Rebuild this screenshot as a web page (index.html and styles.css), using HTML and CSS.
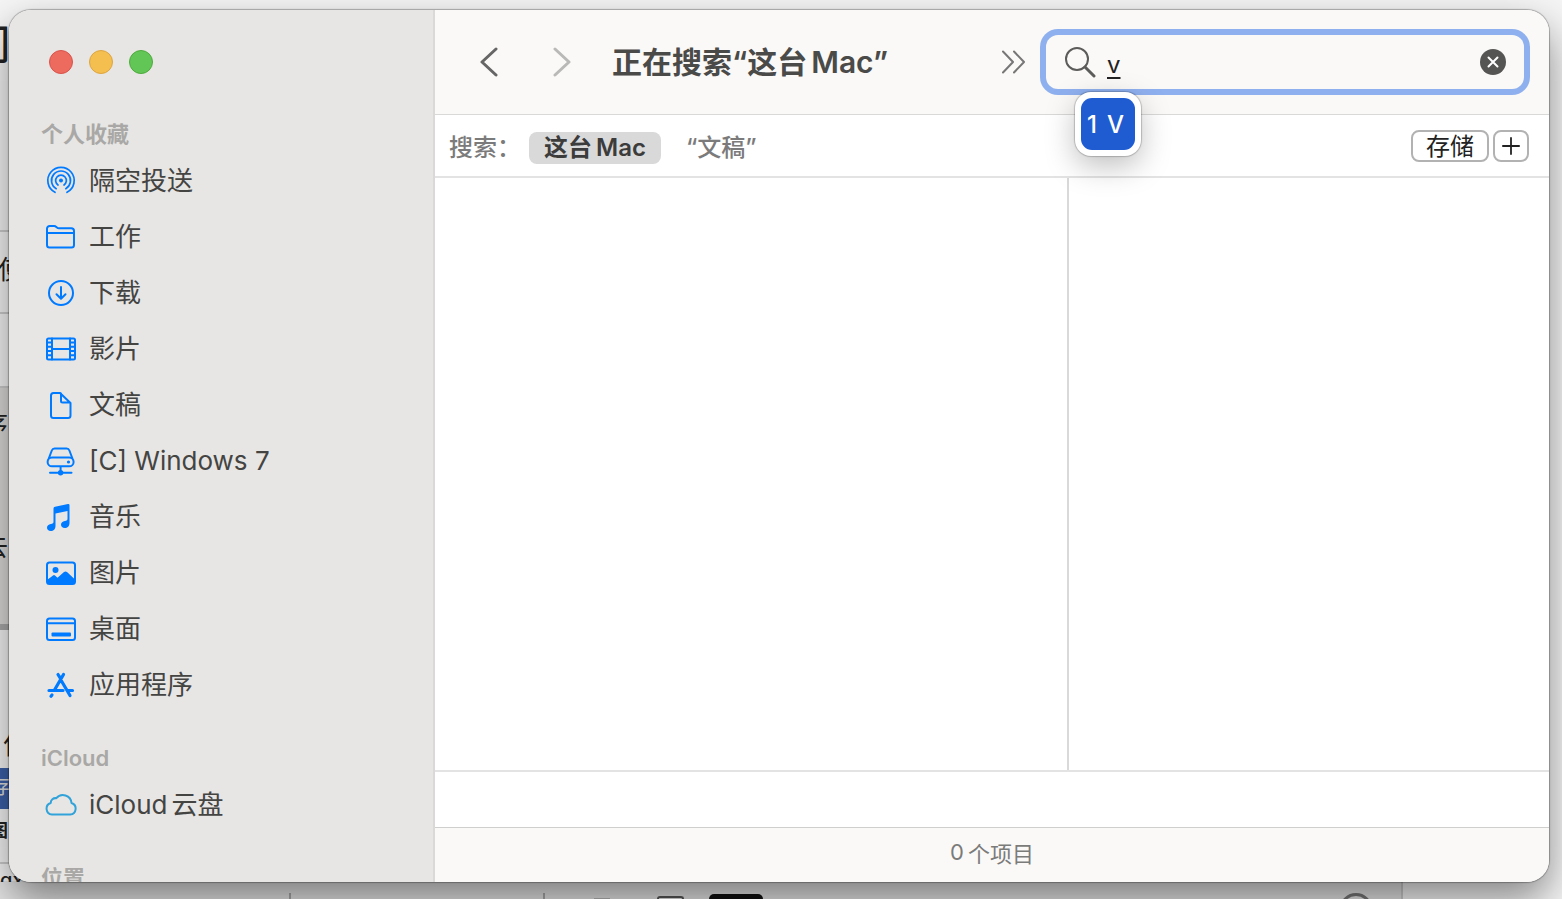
FILE: index.html
```html
<!DOCTYPE html>
<html lang="zh-CN">
<head>
<meta charset="utf-8">
<meta name="viewport" content="width=device-width, initial-scale=1">
<title>正在搜索“这台 Mac”</title>
<link rel="stylesheet" href="styles.css">
</head>
<body>
<div class="backdrop" aria-hidden="true">
  <div class="band band-a"></div>
  <div class="band band-b"></div>
  <div class="band band-c"></div>
  <div class="band band-blue"></div>
  <div class="band band-d"></div>
  <div class="shelf"></div>
  <span class="frag frag-1">们</span>
  <span class="frag frag-2">使</span>
  <span class="frag frag-3">序</span>
  <span class="frag frag-4">去</span>
  <span class="frag frag-5">作</span>
  <span class="frag frag-6">存</span>
  <span class="frag frag-7">图</span>
  <span class="frag frag-8">ngx.</span>
  <i class="tick tick-1"></i>
  <i class="tick tick-2"></i>
  <i class="tick tick-3"></i>
  <i class="scrap scrap-1"></i>
  <i class="scrap scrap-2"></i>
  <i class="scrap scrap-3"></i>
  <i class="scrap scrap-4"></i>
</div>

<div class="window">
  <aside class="sidebar">
    <div class="lights">
      <button class="light red" aria-label="关闭"></button>
      <button class="light yellow" aria-label="最小化"></button>
      <button class="light green" aria-label="缩放"></button>
    </div>
    <nav class="places">
      <section class="group">
        <h2>个人收藏</h2>
        <a href="#airdrop"><svg viewBox="0 0 32 32" class="icon thin"><circle cx="16" cy="15.500" r="2" class="fill"/><path d="M13 20a5.400 5.400 0 1 1 6 0M11.200 23.700a9.500 9.500 0 1 1 9.600 0M10 27.300a13.200 13.200 0 1 1 12 0"/></svg>隔空投送</a>
        <a href="#work"><svg viewBox="0 0 32 32" class="icon"><path d="M2 24V7.700a2.700 2.700 0 0 1 2.700-2.700h4.300c2.500 0 2.700 2.300 5 2.300h12.300a2.700 2.700 0 0 1 2.700 2.700v14a2.500 2.500 0 0 1-2.500 2.500h-22a2.500 2.500 0 0 1-2.500-2.500zM2 12h27"/></svg>工作</a>
        <a href="#downloads"><svg viewBox="0 0 32 32" class="icon"><circle cx="16" cy="16" r="12"/><path d="M16 10v11.500M11.500 17.300l4.500 4.500 4.500-4.500"/></svg>下载</a>
        <a href="#movies"><svg viewBox="0 0 32 32" class="icon"><rect x="2" y="5.500" width="28" height="21" rx="1.500"/><path d="M7 5.500v21M25 5.500v21M7 16h18M2 9.500h5M2 13.700h5M2 18h5M2 22.300h5M25 9.500h5M25 13.700h5M25 18h5M25 22.300h5"/></svg>影片</a>
        <a href="#documents"><svg viewBox="0 0 32 32" class="icon"><path d="M8.500 4H15l10.500 10v12.500a2.500 2.500 0 0 1-2.500 2.500H8.500a2.500 2.500 0 0 1-2.500-2.500v-20A2.500 2.500 0 0 1 8.500 4zM16 4.500V12a1.500 1.500 0 0 0 1.500 1.500H25"/></svg>文稿</a>
        <a href="#windows"><svg viewBox="0 0 32 32" class="icon"><path d="M3.200 15l3.600-9.500a3 3 0 0 1 2.800-1.900h12a3 3 0 0 1 2.800 1.900L28 15M7 12.500h17.200a4.400 4.400 0 0 1 0 8.800H7a4.400 4.400 0 0 1 0-8.800zM15.600 21.500v6M5 27.700h21.500"/><circle cx="23.500" cy="17" r="1.600" class="fill"/><circle cx="15.600" cy="27.700" r="2.700" class="fill"/></svg>[C] Windows 7</a>
        <a href="#music"><svg viewBox="0 0 32 32" class="icon"><path class="fill" d="M8.500 7.500q0-1.500 1.500-1.800L23 3q1.500-.2 1.500 1.200V22c0 3-2 5-4.800 5-2.200 0-3.700-1.300-3.700-3.200 0-2.300 1.600-3.300 3.800-3.800 1.900-.4 2.700-.8 2.700-2.300V10l-12 2.500V25c0 3-2 5-4.800 5-2.200 0-3.700-1.300-3.700-3.200 0-2.300 1.600-3.300 3.800-3.800C7.700 22.600 8.500 22.200 8.500 20.700z"/></svg>音乐</a>
        <a href="#pictures"><svg viewBox="0 0 32 32" class="icon"><rect x="2" y="5.500" width="28" height="21.500" rx="2.500"/><circle class="fill" cx="10.500" cy="13" r="3"/><path class="fill" d="M2 23l6-4.500q1-.8 2 0l2.500 2.300 6.500-5.800q1.500-1.200 3 0l8 7.500v2q0 2.500-2.500 2.500h-23Q2 27 2 24.500z"/></svg>图片</a>
        <a href="#desktop"><svg viewBox="0 0 32 32" class="icon"><rect x="2" y="5.500" width="28" height="21.500" rx="2.500"/><path d="M2 10.300h28"/><rect class="fill" x="6.500" y="19.500" width="19.500" height="4" rx="1"/></svg>桌面</a>
        <a href="#apps"><svg viewBox="0 0 32 32" class="icon bold"><path d="M13 5.500l2 3.200M18.500 5.500L9.500 21M4 21.500h14M7 26l-1 1.200M16.500 12l8.500 14.500M22.500 21.500h5"/></svg>应用程序</a>
      </section>
      <section class="group">
        <h2>iCloud</h2>
        <a href="#icloud"><svg viewBox="0 0 32 32" class="icon cloud"><path d="M7 25.500a5.900 5.900 0 0 1-1.300-11.500 4.800 4.800 0 0 1 5.600-4.800A8.600 8.600 0 0 1 26.500 14 5.900 5.900 0 0 1 25.200 25.500z"/></svg>iCloud<span class="cjk">云盘</span></a>
      </section>
      <section class="group">
        <h2>位置</h2>
      </section>
    </nav>
  </aside>

  <main class="content">
    <header class="toolbar">
      <button class="nav" aria-label="后退"><svg viewBox="0 0 18 30"><path d="M16 2L2 15l14 13"/></svg></button>
      <button class="nav off" aria-label="前进"><svg viewBox="0 0 18 30"><path d="M2 2l14 13L2 28"/></svg></button>
      <h1>正在搜索“这台<span class="word">Mac”</span></h1>
      <button class="more" aria-label="更多"><svg viewBox="0 0 26 24"><path d="M2 1.500L12 12 2 22.500M13 1.500L23 12 13 22.500"/></svg></button>
      <div class="search">
        <label for="query" aria-label="搜索"><svg viewBox="0 0 32 32"><circle cx="13" cy="13" r="11"/><path class="handle" d="M21 21l9 9"/></svg></label>
        <input id="query" type="text" value="v">
        <button class="clear" aria-label="清除"><svg viewBox="0 0 26 26"><circle cx="13" cy="13" r="13"/><path d="M8.500 8.500l9 9M17.500 8.500l-9 9"/></svg></button>
        <div class="candidates"><div class="candidate"><span>1</span><span>V</span></div></div>
      </div>
    </header>
    <div class="scope">
      <span class="scope-label">搜索：</span>
      <button class="chip on">这台<span class="word">Mac</span></button>
      <button class="chip">“文稿”</button>
      <div class="actions">
        <button class="save">存储</button>
        <button class="add" aria-label="添加"><svg viewBox="0 0 20 20"><path d="M10 1v18M1 10h18"/></svg></button>
      </div>
    </div>
    <div class="results">
      <div class="list"></div>
      <div class="preview"></div>
    </div>
    <div class="pathbar"></div>
    <footer class="status">0<span class="cjk">个项目</span></footer>
  </main>
</div>
</body>
</html>
```

FILE: styles.css
```css
* {
  box-sizing: border-box;
}

body {
  margin: 0;
  height: 100vh;
  padding: 10px 13px 17px 9px;
  display: flex;
  position: relative;
  overflow: hidden;
  background: #f5f5f5;
  color: #444443;
  font-family: Inter, "Noto Sans CJK SC", sans-serif;
}

button {
  margin: 0;
  padding: 0;
  border: 0;
  background: none;
  color: inherit;
  font: inherit;
}

svg {
  display: block;
  fill: none;
  stroke: currentColor;
  stroke-linecap: round;
  stroke-linejoin: round;
}

h1,
h2 {
  margin: 0;
}

/* Pages behind the window */
.backdrop {
  position: absolute;
  inset: 0;
  overflow: hidden;
  color: #222;
}

.band,
.shelf,
.frag,
.tick,
.scrap {
  position: absolute;
  left: 0;
}

.band {
  width: 12px;
}

.band-a {
  top: 230px;
  height: 84px;
  border-top: 2px solid #ccc;
  border-bottom: 2px solid #ccc;
}

.band-b {
  top: 386px;
  height: 240px;
  border-top: 2px solid #ccc;
  background: #dcdad8;
}

.band-c {
  top: 624px;
  height: 6px;
  background: #aaa;
}

.band-blue {
  top: 768px;
  height: 41px;
  background: #3b60a8;
}

.band-d {
  top: 862px;
  height: 2px;
  background: #ccc;
}

.shelf {
  right: 160px;
  bottom: 0;
  height: 18px;
  background: #e4e4e4;
}

.frag {
  width: 30px;
  line-height: 30px;
  font-size: 26px;
  white-space: nowrap;
}

.frag-1 {
  top: 30px;
  left: -30px;
  font-size: 40px;
  font-weight: 500;
}

.frag-2 {
  top: 255px;
  left: -2px;
}

.frag-3 {
  top: 410px;
  left: -18px;
}

.frag-4 {
  top: 532px;
  left: -18px;
}

.frag-5 {
  top: 730px;
  left: 3px;
}

.frag-6 {
  top: 772px;
  left: -10px;
  color: #ddd;
  font-size: 20px;
}

.frag-7 {
  top: 816px;
  left: -10px;
  font-size: 18px;
  font-weight: 700;
}

.frag-8 {
  top: 865px;
  left: -12px;
  width: 48px;
  height: 17px;
  overflow: hidden;
  font-size: 20px;
  font-weight: 500;
}

.tick {
  width: 2px;
  height: 6px;
  bottom: 0;
  background: #a8a8a8;
}

.tick-1 {
  left: 289px;
}

.tick-2 {
  left: 543px;
}

.tick-3 {
  left: 1401px;
  height: 18px;
  background: #ccc;
}

.scrap {
  bottom: 0;
}

.scrap-1 {
  left: 594px;
  width: 16px;
  height: 1px;
  background: #b5b5b5;
}

.scrap-2 {
  left: 657px;
  width: 27px;
  height: 3px;
  border: 2px solid #555;
  border-bottom: 0;
  border-radius: 3px 3px 0 0;
}

.scrap-3 {
  left: 709px;
  width: 54px;
  height: 5px;
  border-radius: 8px 8px 0 0;
  background: #111;
}

.scrap-4 {
  bottom: -24px;
  left: 1340px;
  width: 32px;
  height: 30px;
  border: 3px solid #777;
  border-radius: 50%;
}

/* Finder window */
.window {
  position: relative;
  flex: 1;
  min-width: 0;
  display: flex;
  overflow: hidden;
  border-radius: 22px;
  background: #fff;
  box-shadow: 0 0 1px 1px rgba(0, 0, 0, .28), 0 18px 40px rgba(0, 0, 0, .45);
}

.sidebar {
  flex: 0 0 426px;
  display: flex;
  flex-direction: column;
  overflow: hidden;
  border-right: 2px solid #dad9d7;
  background: #e7e6e4;
}

.lights {
  flex: none;
  display: flex;
  gap: 16px;
  padding: 40px 40px 41px;
}

.light {
  width: 24px;
  height: 24px;
  border: 1px solid #d9534a;
  border-radius: 50%;
}

.red {
  background: #ed6a5f;
}

.yellow {
  border-color: #dda540;
  background: #f5bf4f;
}

.green {
  border-color: #4eab3c;
  background: #62c656;
}

.places {
  flex: 1;
  min-height: 0;
  display: flex;
  flex-direction: column;
  gap: 26px;
  padding: 0 32px;
  overflow: hidden;
}

.group {
  flex: none;
}

.group h2 {
  line-height: 38px;
  color: #a9a8a6;
  font-size: 22px;
  font-weight: 600;
}

.group a {
  display: flex;
  align-items: center;
  height: 56px;
  padding-left: 4px;
  color: #444443;
  font-size: 26px;
  line-height: 32px;
  text-decoration: none;
}

.icon {
  width: 32px;
  height: 32px;
  margin-right: 12px;
  color: #007aff;
  stroke-width: 2;
}

.icon .fill {
  fill: currentColor;
  stroke: none;
}

.icon.thin {
  stroke-width: 1.7;
}

.icon.bold {
  stroke-width: 3.2;
}

.icon.cloud {
  color: #31a3d9;
}

.cjk,
.word {
  margin-left: 4px;
}

.content {
  flex: 1;
  min-width: 0;
  display: flex;
  flex-direction: column;
}

.toolbar {
  flex: none;
  display: flex;
  align-items: center;
  height: 105px;
  padding: 0 25px 0 45px;
  border-bottom: 1px solid #d9d9d8;
  background: #faf9f7;
}

.nav {
  margin-right: 55px;
  color: #666;
}

.nav.off {
  margin-right: 41px;
  color: #b9b9b8;
}

.nav svg {
  width: 18px;
  height: 30px;
  stroke-width: 3;
}

h1 {
  flex: 1;
  min-width: 0;
  white-space: nowrap;
  color: #4a4a49;
  font-size: 30px;
  font-weight: 600;
  line-height: 40px;
}

.more {
  margin-right: 19px;
  color: #777;
}

.more svg {
  width: 26px;
  height: 24px;
  stroke-width: 2;
}

.search {
  position: relative;
  flex: 0 0 478px;
  min-width: 0;
  display: flex;
  align-items: center;
  height: 54px;
  padding: 0 18px;
  border-radius: 12px;
  background: #faf9f7;
  box-shadow: 0 0 0 6px #8fb0ef;
}

.search label svg {
  width: 32px;
  height: 32px;
  color: #5c5c5b;
  stroke-width: 2;
}

.search .handle {
  stroke-width: 3;
}

.search input {
  flex: 1;
  min-width: 0;
  margin: 0;
  padding: 6px 11px 0;
  border: 0;
  outline: 0;
  background: none;
  color: #222;
  font: 24px/32px Inter, "Noto Sans CJK SC", sans-serif;
  text-decoration: underline 2px;
  text-underline-offset: 4px;
}

.clear svg {
  width: 26px;
  height: 26px;
  stroke: #fff;
  stroke-width: 2;
}

.clear circle {
  fill: #555553;
  stroke: none;
}

.candidates {
  position: absolute;
  z-index: 2;
  top: 57px;
  left: 29px;
  padding: 6px;
  border-radius: 16px;
  background: #fff;
  box-shadow: 0 0 1px 1px rgba(0, 0, 0, .2), 0 10px 30px rgba(0, 0, 0, .25);
}

.candidate {
  display: flex;
  align-items: center;
  gap: 10px;
  width: 54px;
  height: 52px;
  padding-left: 6px;
  border-radius: 11px;
  background: #1f5cd1;
  color: #fff;
  font-size: 24px;
  font-weight: 500;
}

.scope {
  flex: none;
  display: flex;
  align-items: center;
  height: 63px;
  padding: 4px 20px 0 14px;
  border-bottom: 2px solid #e3e3e3;
  font-size: 24px;
  line-height: 32px;
}

.scope-label {
  width: 80px;
  color: #7b7b7b;
  font-weight: 500;
  white-space: nowrap;
}

.chip {
  height: 32px;
  margin-right: 10px;
  padding: 0 15px;
  border-radius: 8px;
  color: #7b7b7b;
  font-weight: 500;
}

.chip.on {
  background: #d9d9d9;
  color: #3c3c3c;
  font-weight: 600;
}

.actions {
  display: flex;
  gap: 4px;
  margin-left: auto;
  padding-bottom: 4px;
}

.save,
.add {
  height: 32px;
  border: 2px solid #b2b2b2;
  border-radius: 8px;
  color: #222;
  line-height: 30px;
}

.save {
  padding: 0 13px;
}

.add {
  width: 36px;
  padding: 0 7px;
}

.add svg {
  width: 18px;
  height: 18px;
  stroke-width: 2;
}

.results {
  flex: 1;
  min-height: 0;
  display: flex;
}

.list {
  flex: 1;
  border-right: 2px solid #d9d9d9;
}

.preview {
  flex: 0 0 480px;
}

.pathbar {
  flex: none;
  height: 58px;
  border-top: 2px solid #e3e3e3;
  border-bottom: 1px solid #cfcfce;
}

.status {
  flex: none;
  display: flex;
  align-items: center;
  justify-content: center;
  height: 54px;
  padding-bottom: 6px;
  background: #faf9f7;
  color: #7b7b7a;
  font-size: 22px;
}
```
